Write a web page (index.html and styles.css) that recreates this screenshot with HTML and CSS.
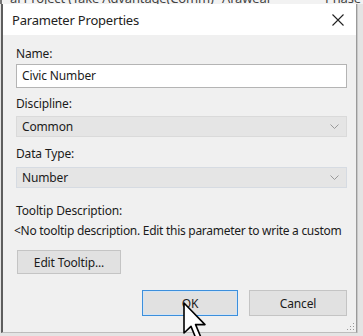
FILE: index.html
```html
<!DOCTYPE html>
<html lang="en">
  <head>
    <meta charset="UTF-8" />
    <title>Parameter Properties</title>
    <link rel="stylesheet" href="styles.css">
  </head>
  <body>
    <div class="backdrop">
      <div class="backdrop__row">
        <span class="backdrop__cell backdrop__cell--wide">al Project (Take Advantage(Comm)</span>
        <span class="backdrop__cell">Araweal</span>
        <span class="backdrop__cell backdrop__cell--end">Phase</span>
      </div>
    </div>
    <div class="dialog">
      <div class="dialog__titlebar">
        <span class="dialog__title">Parameter Properties</span>
        <svg class="dialog__close" width="12" height="12" viewBox="0 0 12 12">
          <path d="M0.5 0.5 L11.5 11.5 M11.5 0.5 L0.5 11.5" stroke="#222" stroke-width="1.1" fill="none" />
        </svg>
      </div>
      <div class="dialog__body">
        <label class="field__label field__label--name">Name:</label>
        <div class="field__input">Civic Number</div>

        <label class="field__label field__label--discipline">Discipline:</label>
        <div class="field__select">
          <span>Common</span>
          <svg class="field__chevron" width="9" height="5" viewBox="0 0 9 5">
            <path d="M0.5 0.5 L4.5 4.5 L8.5 0.5" stroke="#999" stroke-width="1" fill="none" />
          </svg>
        </div>

        <label class="field__label field__label--type">Data Type:</label>
        <div class="field__select field__select--focus">
          <span>Number</span>
          <svg class="field__chevron" width="9" height="5" viewBox="0 0 9 5">
            <path d="M0.5 0.5 L4.5 4.5 L8.5 0.5" stroke="#999" stroke-width="1" fill="none" />
          </svg>
        </div>

        <label class="field__label field__label--tooltip">Tooltip Description:</label>
        <p class="tooltip__text">&lt;No tooltip description. Edit this parameter to write a custom tooltip.&gt;</p>

        <button class="btn btn--edit">Edit Tooltip...</button>

        <div class="dialog__actions">
          <button class="btn btn--ok">OK</button>
          <button class="btn btn--cancel">Cancel</button>
        </div>
        <svg class="dialog__grip" width="9" height="9" viewBox="0 0 9 9">
          <rect x="7" y="1" width="1" height="1" fill="#999" />
          <rect x="4" y="4" width="1" height="1" fill="#999" />
          <rect x="7" y="4" width="1" height="1" fill="#999" />
          <rect x="1" y="7" width="1" height="1" fill="#999" />
          <rect x="4" y="7" width="1" height="1" fill="#999" />
          <rect x="7" y="7" width="1" height="1" fill="#999" />
        </svg>
      </div>
    </div>
    <svg class="cursor" width="28" height="40" viewBox="0 0 14 20">
      <path d="M0.5 0.5 L0.5 15.5 L4 12.2 L6.5 18.3 L8.8 17.3 L6.3 11.3 L11 11.3 Z" fill="#fff" stroke="#000" stroke-width="0.8" stroke-linejoin="round" />
    </svg>
  </body>
</html>
```

FILE: styles.css
```css
* {
  box-sizing: border-box;
  margin: 0;
  padding: 0;
}
body {
  position: relative;
  width: 363px;
  height: 336px;
  overflow: hidden;
  background: #e4e4e4;
  font-family: "Noto Sans", "Open Sans", sans-serif;
  font-size: 12px;
  letter-spacing: -0.15px;
  color: #1b1b1b;
}
.backdrop {
  height: 4px;
  overflow: hidden;
  background: #f2f2f2;
  border-left: 2px solid #777;
}
.backdrop__row {
  display: flex;
  margin-top: -9px;
  font-size: 13px;
  line-height: 14px;
  color: #444;
}
.backdrop__cell {
  padding-left: 8px;
  white-space: nowrap;
}
.backdrop__cell--wide {
  width: 212px;
}
.backdrop__cell--end {
  margin-left: auto;
  padding-right: 2px;
}
.dialog {
  width: 356px;
  margin-left: 1px;
  background: #f0f0f0;
  border-left: 2px solid #5e5e5e;
  border-right: 1px solid #9a9a9a;
  border-bottom: 1px solid #bdbdbd;
  box-shadow: 1px 0 0 #c8c8c8;
}
.dialog__titlebar {
  display: flex;
  align-items: center;
  height: 31px;
  padding: 0 12px 0 9px;
  background: #fff;
}
.dialog__title {
  font-size: 13px;
  letter-spacing: -0.2px;
  color: #222;
}
.dialog__close {
  margin-left: auto;
}
.dialog__body {
  position: relative;
  display: flex;
  flex-direction: column;
  height: 297px;
  padding: 0 9px 0 13px;
}
.field__label {
  display: block;
  height: 16px;
  line-height: 16px;
}
.field__label--name {
  margin-top: 11px;
}
.field__label--discipline {
  margin-top: 8px;
}
.field__label--type {
  margin-top: 9px;
}
.field__label--tooltip {
  margin-top: 15px;
}
.field__input {
  height: 24px;
  line-height: 22px;
  margin-top: 2px;
  padding-left: 5px;
  background: #fff;
  border: 1px solid #b4b4b4;
}
.field__select {
  display: flex;
  align-items: center;
  height: 21px;
  margin-top: 4px;
  padding: 0 7px 0 5px;
  background: #e5e5e5;
  border: 1px solid #dadada;
}
.field__select--focus {
  margin-top: 5px;
  border-color: #d6dbe2;
}
.field__chevron {
  margin-left: auto;
}
.tooltip__text {
  width: 329px;
  height: 18px;
  margin-top: 3px;
  margin-left: -2px;
  line-height: 18px;
  letter-spacing: -0.28px;
  white-space: nowrap;
  overflow: hidden;
}
.btn {
  font-family: "Noto Sans", "Open Sans", sans-serif;
  font-size: 12px;
  letter-spacing: -0.15px;
  color: #1b1b1b;
  background: #e1e1e1;
  border: 1px solid #c4c4c4;
}
.btn--edit {
  align-self: flex-start;
  width: 104px;
  height: 24px;
  margin-top: 10px;
  margin-left: 1px;
}
.dialog__actions {
  display: flex;
  justify-content: flex-end;
  gap: 11px;
  margin-top: 16px;
}
.btn--ok {
  width: 96px;
  height: 26px;
  border: 1px solid #3c8fdc;
  box-shadow: inset 0 0 0 1px #d4e4f3;
}
.btn--cancel {
  width: 98px;
  height: 26px;
}
.dialog__grip {
  position: absolute;
  right: 1px;
  bottom: 1px;
}
.cursor {
  position: absolute;
  left: 183px;
  top: 302px;
}
```
